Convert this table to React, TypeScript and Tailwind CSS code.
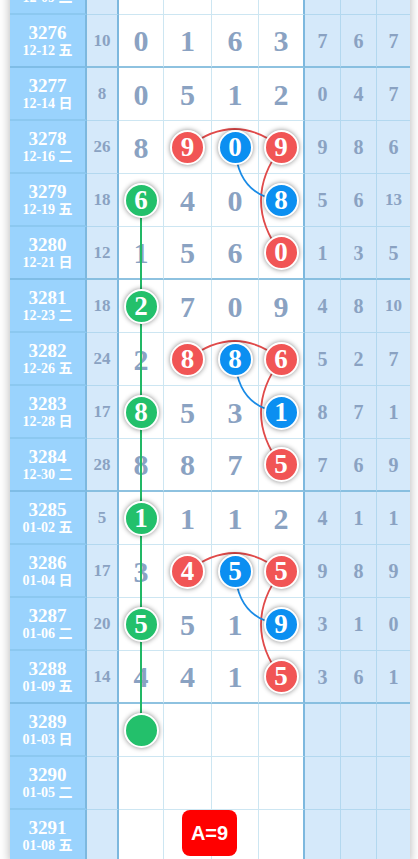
const rows = [
  { no: "3275", date: "12-09 二", s: "", d: "- - - -", r: "- - -", end: false },
  { no: "3276", date: "12-12 五", s: "10", d: "0 1 6 3", r: "7 6 7", end: true },
  { no: "3277", date: "12-14 日", s: "8", d: "0 5 1 2", r: "0 4 7", end: false },
  { no: "3278", date: "12-16 二", s: "26", d: "8 r9 b0 r9", r: "9 8 6", end: false },
  { no: "3279", date: "12-19 五", s: "18", d: "g6 4 0 b8", r: "5 6 13", end: false },
  { no: "3280", date: "12-21 日", s: "12", d: "1 5 6 r0", r: "1 3 5", end: true },
  { no: "3281", date: "12-23 二", s: "18", d: "g2 7 0 9", r: "4 8 10", end: false },
  { no: "3282", date: "12-26 五", s: "24", d: "2 r8 b8 r6", r: "5 2 7", end: false },
  { no: "3283", date: "12-28 日", s: "17", d: "g8 5 3 b1", r: "8 7 1", end: false },
  { no: "3284", date: "12-30 二", s: "28", d: "8 8 7 r5", r: "7 6 9", end: true },
  { no: "3285", date: "01-02 五", s: "5", d: "g1 1 1 2", r: "4 1 1", end: false },
  { no: "3286", date: "01-04 日", s: "17", d: "3 r4 b5 r5", r: "9 8 9", end: false },
  { no: "3287", date: "01-06 二", s: "20", d: "g5 5 1 b9", r: "3 1 0", end: false },
  { no: "3288", date: "01-09 五", s: "14", d: "4 4 1 r5", r: "3 6 1", end: true },
  { no: "3289", date: "01-03 日", s: "", d: "g - - -", r: "- - -", end: false },
  { no: "3290", date: "01-05 二", s: "", d: "- - - -", r: "- - -", end: false },
  { no: "3291", date: "01-08 五", s: "", d: "- - - -", r: "- - -", end: false },
];

const digitW = ["w-[45px]", "w-[48px]", "w-[47px]", "w-[46px]"];
const sideW = ["w-[36px]", "w-[36px]", "w-[33px]"];

const ballBg: Record<string, string> = {
  r: "bg-[#f15555]",
  b: "bg-[#0b8ff1]",
  g: "bg-[#23c06b]",
};

const Ball = ({ v }: { v: string }) => (
  <div
    className={`relative z-10 flex h-[35px] w-[35px] items-center justify-center rounded-full border-2 border-white ${ballBg[v[0]]} shadow-[0_0_5px_rgba(0,0,0,0.45)] text-[27px] font-bold leading-none text-white`}
  >
    {v.slice(1)}
  </div>
);

const Row = ({ row }: { row: (typeof rows)[number] }) => {
  const digits = row.d.split(" ");
  const side = row.r.split(" ");
  const lb = row.end ? "border-b-2 border-b-[#7fbde6]" : "border-b-2 border-b-[#8cc8f0]";
  const wb = row.end ? "border-b-2 border-b-[#8ec2e0]" : "border-b border-b-[#cde6f2]";
  const sb = row.end ? "border-b-2 border-b-[#88bfe0]" : "border-b border-b-[#b3d8ef]";
  return (
    <div className="flex h-[53px]">
      <div
        className={`flex w-[77px] flex-col items-center justify-center bg-[#9ad3fd] border-r-2 border-r-[#7db8de] ${lb} text-white font-bold`}
      >
        <div className="text-[19px] leading-[20px]">{row.no}</div>
        <div className="text-[14px] leading-[16px]">{row.date}</div>
      </div>
      <div
        className={`flex w-[32px] items-center justify-center bg-[#d5e9fa] border-r-2 border-r-[#7db8de] ${sb} text-[17px] font-bold text-[#8aa2c2]`}
      >
        {row.s}
      </div>
      {digits.map((v, i) => (
        <div
          key={i}
          className={`flex ${digitW[i]} items-center justify-center bg-white ${
            i === 3 ? "border-r-2 border-r-[#7db8de]" : "border-r border-r-[#cde6f2]"
          } ${wb} text-[30px] font-bold text-[#8aa2c2]`}
        >
          {v === "-" ? null : /[rbg]/.test(v[0]) ? <Ball v={v} /> : v}
        </div>
      ))}
      {side.map((v, i) => (
        <div
          key={i}
          className={`flex ${sideW[i]} items-center justify-center bg-[#d5e9fa] ${
            i < 2 ? "border-r border-r-[#b3d8ef]" : ""
          } ${sb} ${v.length > 1 ? "text-[17px]" : "text-[20px]"} font-bold text-[#8aa2c2]`}
        >
          {v === "-" ? null : v}
        </div>
      ))}
    </div>
  );
};

// curves for the three marked groups, page coords
const groups = [147.5, 359.5, 571.5];

export default function App() {
  return (
    <div className="h-[859px] w-[418px] overflow-hidden bg-white font-['Liberation_Serif','Noto_Sans_CJK_SC',serif]">
      <div className="relative ml-[10px] mt-[-38px] w-[400px] shadow-[0_0_10px_rgba(0,0,0,0.3)]">
        {rows.map((row) => (
          <Row key={row.no} row={row} />
        ))}
        <svg
          className="pointer-events-none absolute left-0 top-0"
          width={400}
          height={901}
          viewBox="10 -38 400 901"
          fill="none"
        >
          <line x1={141} y1={200.5} x2={141} y2={730.5} stroke="#22b866" strokeWidth={2} />
          {groups.map((y) => (
            <g key={y} strokeWidth={1.8}>
              <path d={`M187.5 ${y} Q235 ${y - 37} 281 ${y}`} stroke="#e04a4a" />
              <path d={`M281 ${y} Q241 ${y + 53} 281 ${y + 106}`} stroke="#e04a4a" />
              <path d={`M235 ${y} Q238 ${y + 48} 281 ${y + 53}`} stroke="#1a8be6" />
            </g>
          ))}
        </svg>
        <div className="absolute left-[172px] top-[848px] z-20 flex h-[46px] w-[55px] items-center justify-center rounded-[8px] bg-[#ff0000] font-['Liberation_Sans',sans-serif] text-[20px] font-bold text-white">
          A=9
        </div>
      </div>
    </div>
  );
}
